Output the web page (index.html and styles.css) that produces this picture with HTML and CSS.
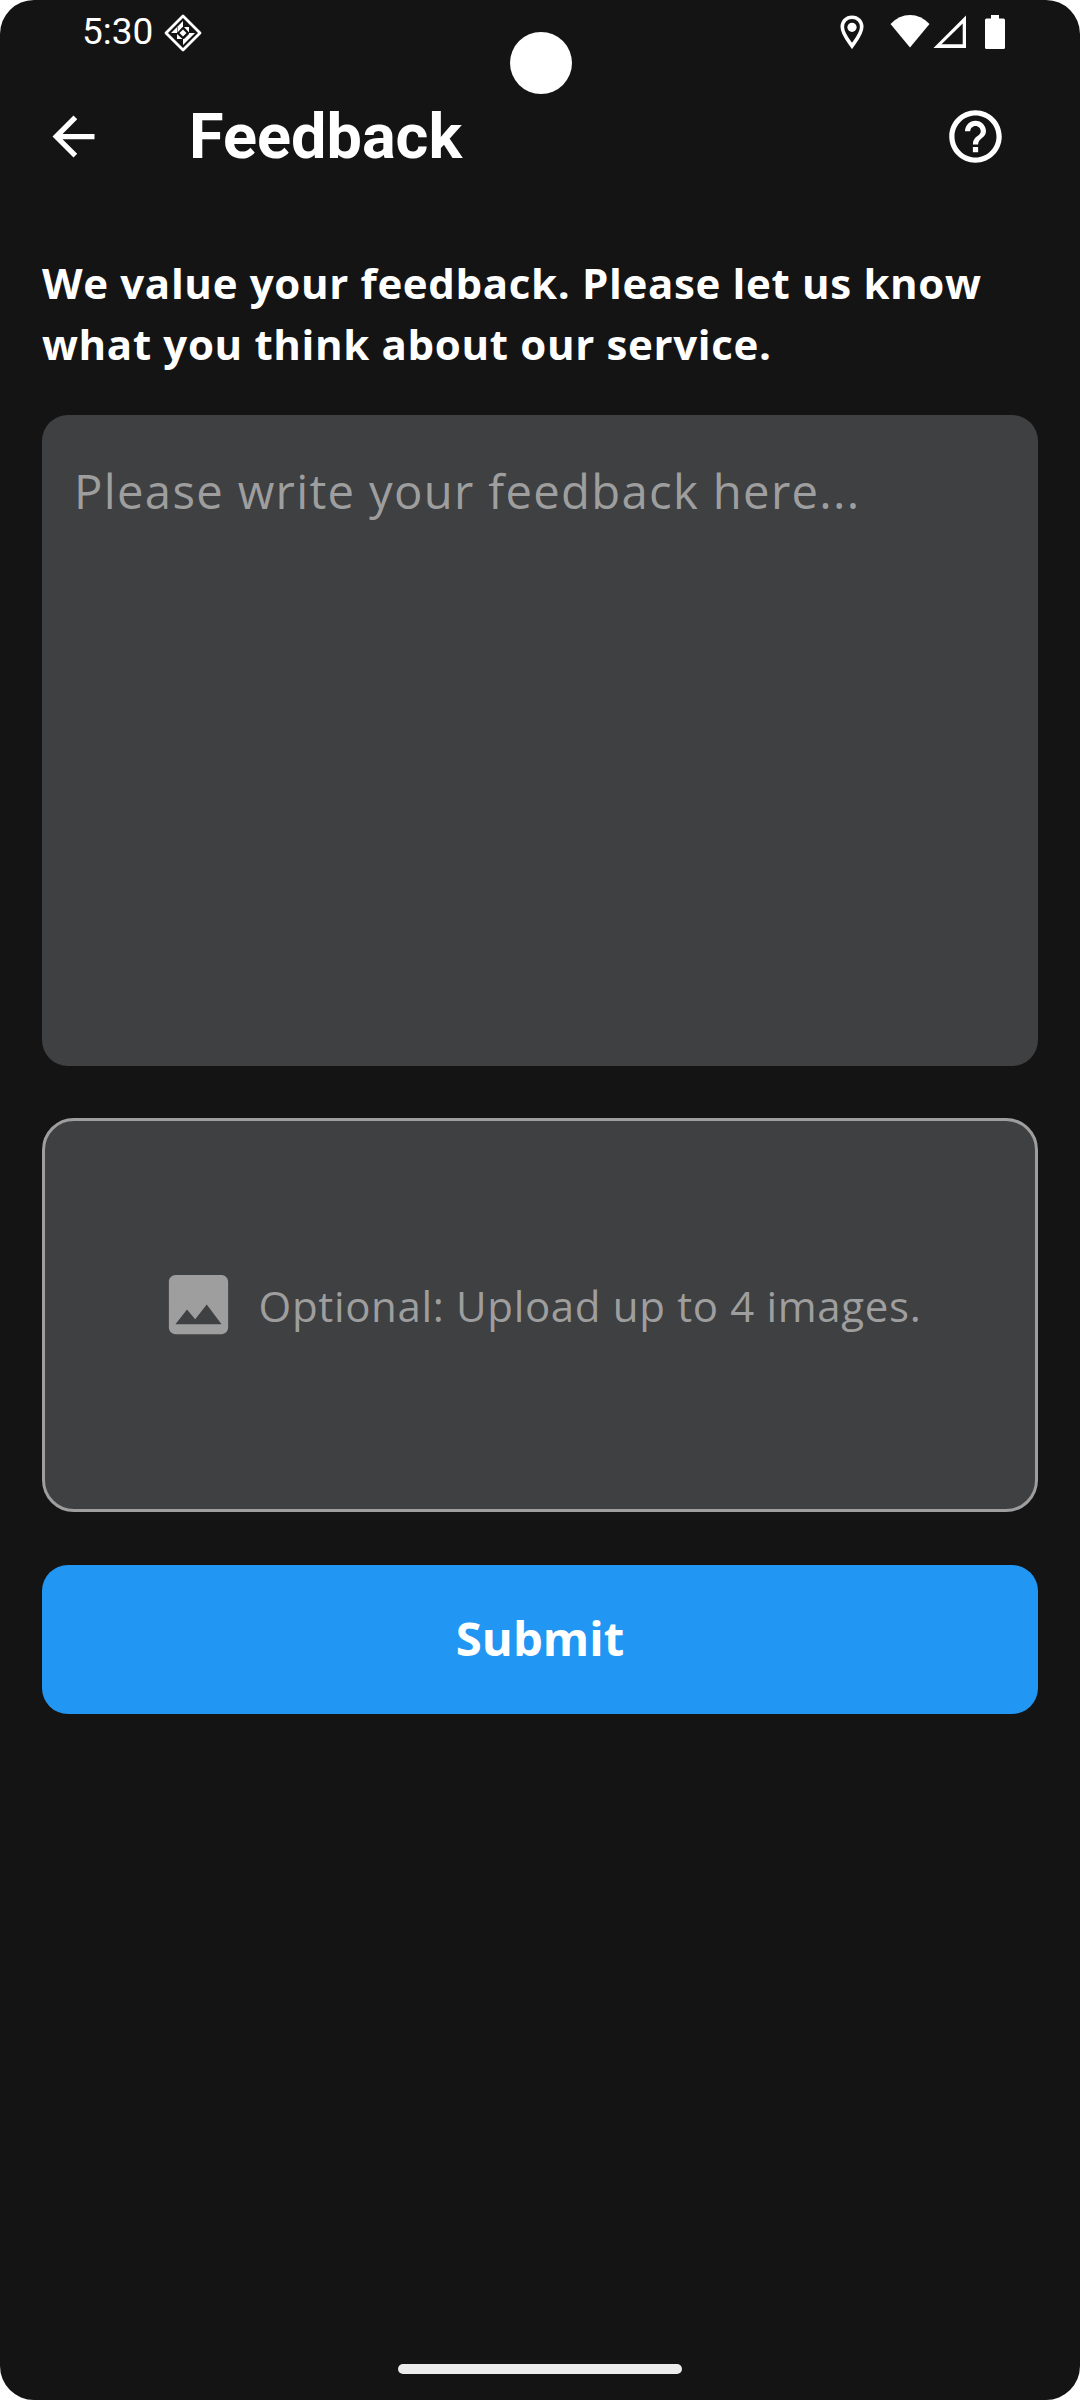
FILE: index.html
```html
<!DOCTYPE html>
<html lang="en">
<head>
<meta charset="utf-8">
<title>Feedback</title>
<link rel="stylesheet" href="styles.css">
</head>
<body>
<div class="screen">
  <header class="status-bar">
    <span class="clock">5:30</span>
    <svg class="debug-icon" viewBox="0 0 38 38" width="38" height="38">
      <path d="M19 2 36 19 19 36 2 19Z" fill="none" stroke="#fff" stroke-width="2.800" stroke-linejoin="round"/>
      <g fill="#fff">
        <path d="M19 7v6h-6ZM13 13v6H7ZM25 19h6l-6 6ZM19 25h6l-6 6Z"/>
        <path d="M13.500 13h5l-5 5.500ZM20 13h5v5.500ZM13 20v5h5.500ZM25 20v5h-5Z"/>
        <path d="M19 15.500l3.500 3.500-3.500 3.500-3.500-3.500Z"/>
      </g>
    </svg>
    <div class="system-icons">
      <svg class="pin-icon" viewBox="0 0 24 34" width="24" height="34">
        <path d="M12 2.200C6.200 2.200 2.300 6.500 2.300 12 2.300 18.500 7.500 24.500 12 31 16.500 24.500 21.700 18.500 21.700 12 21.700 6.500 17.800 2.200 12 2.200Z" fill="none" stroke="#fff" stroke-width="3.600"/>
        <circle cx="12" cy="12.300" r="4.600" fill="#fff"/>
      </svg>
      <svg class="wifi-icon" viewBox="0 0 40 34" width="40" height="34">
        <path d="M.5 9Q9 0 20 0T39.500 9L20 32.500Z" fill="#fff"/>
      </svg>
      <svg class="signal-icon" viewBox="0 0 34 34" width="34" height="34">
        <path d="M33 .5V33H.5ZM29.700 8.500 8.500 29.300H29.700Z" fill="#fff" fill-rule="evenodd"/>
      </svg>
      <svg class="battery-icon" viewBox="0 0 20 34" width="20" height="34">
        <path d="M6 0h8v3.500h4.500Q20 3.500 20 5v27.500q0 1.500-1.500 1.500h-17Q0 34 0 32.500V5q0-1.500 1.500-1.500H6Z" fill="#fff"/>
      </svg>
    </div>
  </header>
  <div class="camera"></div>

  <nav class="app-bar">
    <svg class="app-icon" viewBox="0 0 24 24"><path fill="#fff" d="M20 11H7.830l5.590-5.590L12 4l-8 8 8 8 1.410-1.410L7.830 13H20v-2z"/></svg>
    <h1 class="title">Feedback</h1>
    <svg class="app-icon" viewBox="0 0 24 24"><path fill="#fff" d="M11 18h2v-2h-2v2zm1-16C6.480 2 2 6.480 2 12s4.480 10 10 10 10-4.480 10-10S17.520 2 12 2zm0 18c-4.410 0-8-3.590-8-8s3.590-8 8-8 8 3.590 8 8-3.590 8-8 8zm0-14c-2.210 0-4 1.790-4 4h2c0-1.100.9-2 2-2s2 .9 2 2c0 2-3 1.750-3 5h2c0-2.250 3-2.500 3-5 0-2.210-1.790-4-4-4z"/></svg>
  </nav>

  <main class="content">
    <p class="intro">We value your feedback. Please let us know<br>what you think about our service.</p>
    <div class="feedback-field">Please write your feedback here...</div>
    <div class="upload">
      <svg class="image-icon" viewBox="0 0 24 24"><path fill="#9e9e9e" d="M21 19V5c0-1.100-.9-2-2-2H5c-1.100 0-2 .9-2 2v14c0 1.100.9 2 2 2h14c1.100 0 2-.9 2-2zM8.500 13.500l2.500 3.010L14.500 12l4.500 6H5l3.500-4.500z"/></svg>
      <span class="upload-label">Optional: Upload up to 4 images.</span>
    </div>
    <button class="submit" type="button">Submit</button>
  </main>
  <div class="home-bar"></div>
</div>
</body>
</html>
```
FILE: styles.css
```css
* { box-sizing: border-box; }

body {
  margin: 0;
  background: #fff;
}

.screen {
  position: relative;
  display: flex;
  flex-direction: column;
  width: 1080px;
  height: 2400px;
  border-radius: 34px;
  background: #141414;
  color: #fff;
  font-family: "Open Sans", "Noto Sans", sans-serif;
  overflow: hidden;
}

.status-bar {
  display: flex;
  align-items: flex-start;
  height: 74px;
  padding: 14px 75px 0 82px;
}

.clock {
  width: 82px;
  font: 400 37px/36px Roboto, sans-serif;
}

.system-icons {
  display: flex;
  margin: 1px 0 0 auto;
}

.wifi-icon { margin-left: 26px; }
.signal-icon { margin-left: 3px; }
.battery-icon { margin-left: 18px; }

.camera {
  position: absolute;
  top: 31.5px;
  left: 509.5px;
  width: 62px;
  height: 62px;
  border-radius: 50%;
  background: #fff;
}

.app-bar {
  display: flex;
  align-items: center;
  height: 125px;
  padding: 0 73px 0 42px;
}

.app-icon {
  width: 63px;
  height: 63px;
}

.title {
  flex: 1;
  margin: 0 0 0 84px;
  font: 700 63px/74px Roboto, sans-serif;
}

.content {
  display: flex;
  flex-direction: column;
  padding: 53px 42px 0;
}

.intro {
  margin: 0 0 41px;
  font-size: 42px;
  line-height: 61px;
  font-weight: 700;
  letter-spacing: .66px;
}

.feedback-field {
  height: 651px;
  padding: 44px 32px;
  border-radius: 26px;
  background: #3f4042;
  color: #9e9e9e;
  font-size: 47.25px;
  line-height: 64px;
  letter-spacing: 1.31px;
}

.upload {
  display: flex;
  align-items: center;
  justify-content: center;
  gap: 21px;
  height: 394px;
  margin-top: 52px;
  padding-bottom: 22px;
  border: 3px solid #9e9e9e;
  border-radius: 32px;
  background: #3f4042;
  color: #9e9e9e;
}

.image-icon {
  width: 79px;
  height: 79px;
}

.upload-label {
  padding-top: 3px;
  font-size: 42px;
  line-height: 58px;
  letter-spacing: .66px;
}

.submit {
  height: 149px;
  margin-top: 53px;
  padding: 0 0 3px;
  border: 0;
  border-radius: 26px;
  background: #2196f3;
  color: #fff;
  font: 700 47.25px/64px "Open Sans", "Noto Sans", sans-serif;
}

.home-bar {
  width: 284px;
  height: 10px;
  margin: auto auto 26px;
  border-radius: 5px;
  background: #ececec;
}
```
